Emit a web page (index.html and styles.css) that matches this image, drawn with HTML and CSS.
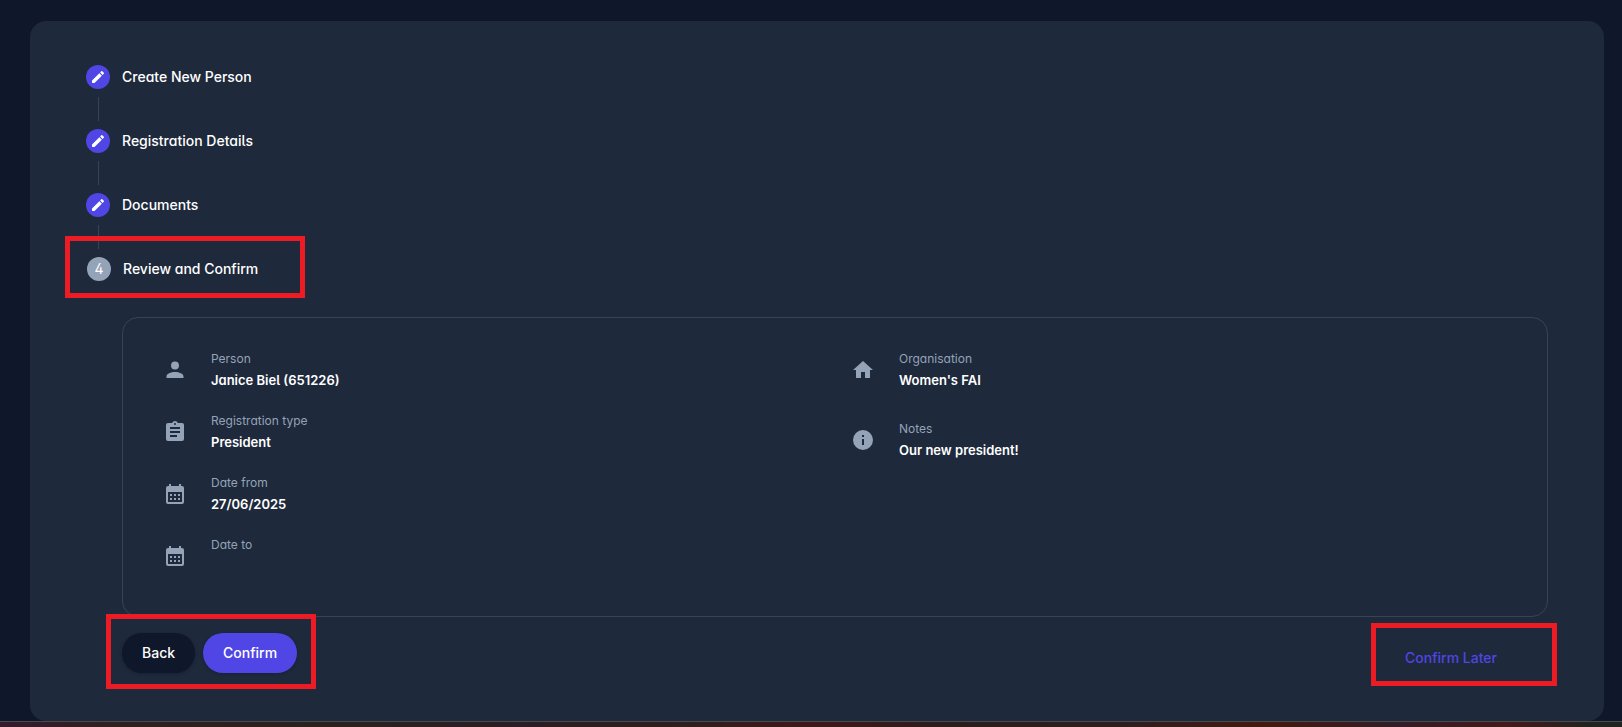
FILE: index.html
```html
<!DOCTYPE html>
<html lang="en">
<head>
<meta charset="utf-8">
<meta name="viewport" content="width=device-width, initial-scale=1">
<title>Review and Confirm</title>
<link rel="stylesheet" href="styles.css">
</head>
<body>
<svg class="symbols" aria-hidden="true">
  <symbol id="edit" viewBox="0 0 24 24"><path d="M3 17.250V21h3.750L17.810 9.940l-3.750-3.750L3 17.250zM20.710 7.040a1 1 0 0 0 0-1.410l-2.340-2.340a1 1 0 0 0-1.410 0l-1.830 1.830 3.750 3.750 1.830-1.830z"/></symbol>
  <symbol id="person" viewBox="0 0 24 24"><path d="M12 11.500a4 4 0 1 0 0-8 4 4 0 0 0 0 8zM3.500 20v-1.500C3.500 15.500 8 14 12 14s8.500 1.500 8.500 4.500V20z"/></symbol>
  <symbol id="clipboard" viewBox="0 0 24 24"><path d="M19 3h-4.180C14.400 1.840 13.300 1 12 1s-2.400.84-2.820 2H5a2 2 0 0 0-2 2v14a2 2 0 0 0 2 2h14a2 2 0 0 0 2-2V5a2 2 0 0 0-2-2zm-7 0a1 1 0 1 1 0 2 1 1 0 0 1 0-2zm2 14H7v-2h7v2zm3-4H7v-2h10v2zm0-4H7V7h10v2z"/></symbol>
  <symbol id="calendar" viewBox="0 0 20 20"><path fill-rule="evenodd" d="M4 0h2v2h8V0h2v2h1a2 2 0 0 1 2 2v14a2 2 0 0 1-2 2H3a2 2 0 0 1-2-2V4a2 2 0 0 1 2-2h1zM3 8v10h14V8zM5 10h2v2H5zm4 0h2v2H9zm4 0h2v2h-2zM5 14h2v2H5zm4 0h2v2H9zm4 0h2v2h-2z"/></symbol>
  <symbol id="home" viewBox="0 0 24 24"><path d="M10 20v-6h4v6h5v-8h3L12 3 2 12h3v8z"/></symbol>
  <symbol id="info" viewBox="0 0 24 24"><path d="M12 2a10 10 0 1 0 0 20 10 10 0 0 0 0-20zm1 15h-2v-6h2v6zm0-8h-2V7h2v2z"/></symbol>
</svg>
<main class="page">
  <section class="card">
    <ol class="steps">
      <li class="step"><span class="badge"><svg><use href="#edit"/></svg></span><span>Create New Person</span></li>
      <li class="step"><span class="badge"><svg><use href="#edit"/></svg></span><span>Registration Details</span></li>
      <li class="step"><span class="badge"><svg><use href="#edit"/></svg></span><span>Documents</span></li>
      <li class="step current" aria-current="step"><span class="badge">4</span><span>Review and Confirm</span></li>
    </ol>
    <div class="content">
      <div class="summary">
        <dl class="column">
          <div class="entry"><svg><use href="#person"/></svg><div><dt>Person</dt><dd>Janice Biel (651226)</dd></div></div>
          <div class="entry"><svg><use href="#clipboard"/></svg><div><dt>Registration type</dt><dd>President</dd></div></div>
          <div class="entry"><svg class="cal"><use href="#calendar"/></svg><div><dt>Date from</dt><dd>27/06/2025</dd></div></div>
          <div class="entry"><svg class="cal"><use href="#calendar"/></svg><div><dt>Date to</dt><dd></dd></div></div>
        </dl>
        <dl class="column wide-gap">
          <div class="entry"><svg><use href="#home"/></svg><div><dt>Organisation</dt><dd>Women's FAI</dd></div></div>
          <div class="entry"><svg><use href="#info"/></svg><div><dt>Notes</dt><dd>Our new president!</dd></div></div>
        </dl>
      </div>
      <div class="actions">
        <div class="marked">
          <button class="button dark" type="button">Back</button>
          <button class="button primary" type="button">Confirm</button>
        </div>
        <div class="marked later"><button class="button text" type="button">Confirm Later</button></div>
      </div>
    </div>
  </section>
</main>
<footer class="strip"></footer>
</body>
</html>
```

FILE: styles.css
```css
* { box-sizing: border-box; }

body {
  margin: 0;
  min-height: 100vh;
  display: flex;
  flex-direction: column;
  background: #0f172a;
  color: #fff;
  font-family: Inter, "Liberation Sans", sans-serif;
  font-feature-settings: "cv11", "cv05", "cv02";
  font-size: 14px;
  line-height: 20px;
}

.symbols { position: absolute; width: 0; height: 0; }
svg { fill: currentColor; }

.page { flex: 1; display: grid; padding: 21px 18px 0 30px; }

.card {
  padding: 32px 56px 31px 32px;
  border-radius: 16px;
  background: #1e293b;
}

.steps { margin: 0; padding: 0; list-style: none; }

.step {
  position: relative;
  display: flex;
  align-items: center;
  gap: 12px;
  height: 64px;
  padding: 16px 24px 0;
  font-weight: 500;
}

.step:first-child { height: 48px; padding-top: 0; }

.step:not(.current)::after {
  content: "";
  position: absolute;
  left: 36px;
  bottom: -20px;
  width: 1px;
  height: 24px;
  background: #374357;
}

.badge {
  display: grid;
  place-items: center;
  width: 24px;
  height: 24px;
  border-radius: 50%;
  background: #4f46e5;
}
.badge svg { width: 16px; height: 16px; }

.step.current {
  width: 240px;
  height: 62px;
  margin: 7px 0 0 3px;
  padding: 4px 0 0 17px;
  border: 5px solid #ed1c24;
}
.current .badge { background: #94a3b8; font-weight: 400; }

.content { margin-top: 19px; padding-left: 60px; }

.summary {
  display: grid;
  grid-template-columns: 1fr 1fr;
  column-gap: 32px;
  padding: 31px 40px 39px;
  border: 1px solid #374357;
  border-radius: 16px;
}

.column { display: flex; flex-direction: column; gap: 20px; margin: 0; }
.wide-gap { gap: 28px; }

.entry { display: flex; align-items: center; gap: 24px; }
.entry > svg { flex: none; width: 24px; height: 24px; color: #94a3b8; }
.entry > .cal { padding: 2px; }

dt { font-size: 12px; line-height: 20px; color: #94a3b8; }
dd { min-height: 22px; margin: 0; font-size: 13px; line-height: 22px; font-weight: 600; }

.actions {
  display: flex;
  justify-content: space-between;
  align-items: flex-end;
  margin: -3px -9px 0 -16px;
}

.marked {
  position: relative;
  display: flex;
  gap: 8px;
  padding: 14px 14px 11px 11px;
  border: 5px solid #ed1c24;
}
.later { margin-bottom: 3px; padding: 10px 35px 3px 9px; }

.button {
  height: 40px;
  padding: 0 20px;
  border: 0;
  border-radius: 20px;
  color: #fff;
  font: inherit;
  font-weight: 500;
  font-feature-settings: normal;
  cursor: pointer;
}
.dark { background: #0f172a; box-shadow: 0 1px 3px #0f172a66; }
.primary { background: #4f46e5; box-shadow: 0 1px 3px #0f172a66; }
.text { background: none; color: #4f46e5; }

.strip {
  height: 6px;
  border-top: 1px solid #484a4c;
  background: linear-gradient(90deg, #351b2b, #301f1f 8%, #2a211f 20%, #2a1d23 32%, #301d1d 42%, #3f1819 50%, #2a1d1d 60%, #301d1d 70%, #45190f 78%, #321d26 86%, #45191a 93%, #222220 98%);
}
```
